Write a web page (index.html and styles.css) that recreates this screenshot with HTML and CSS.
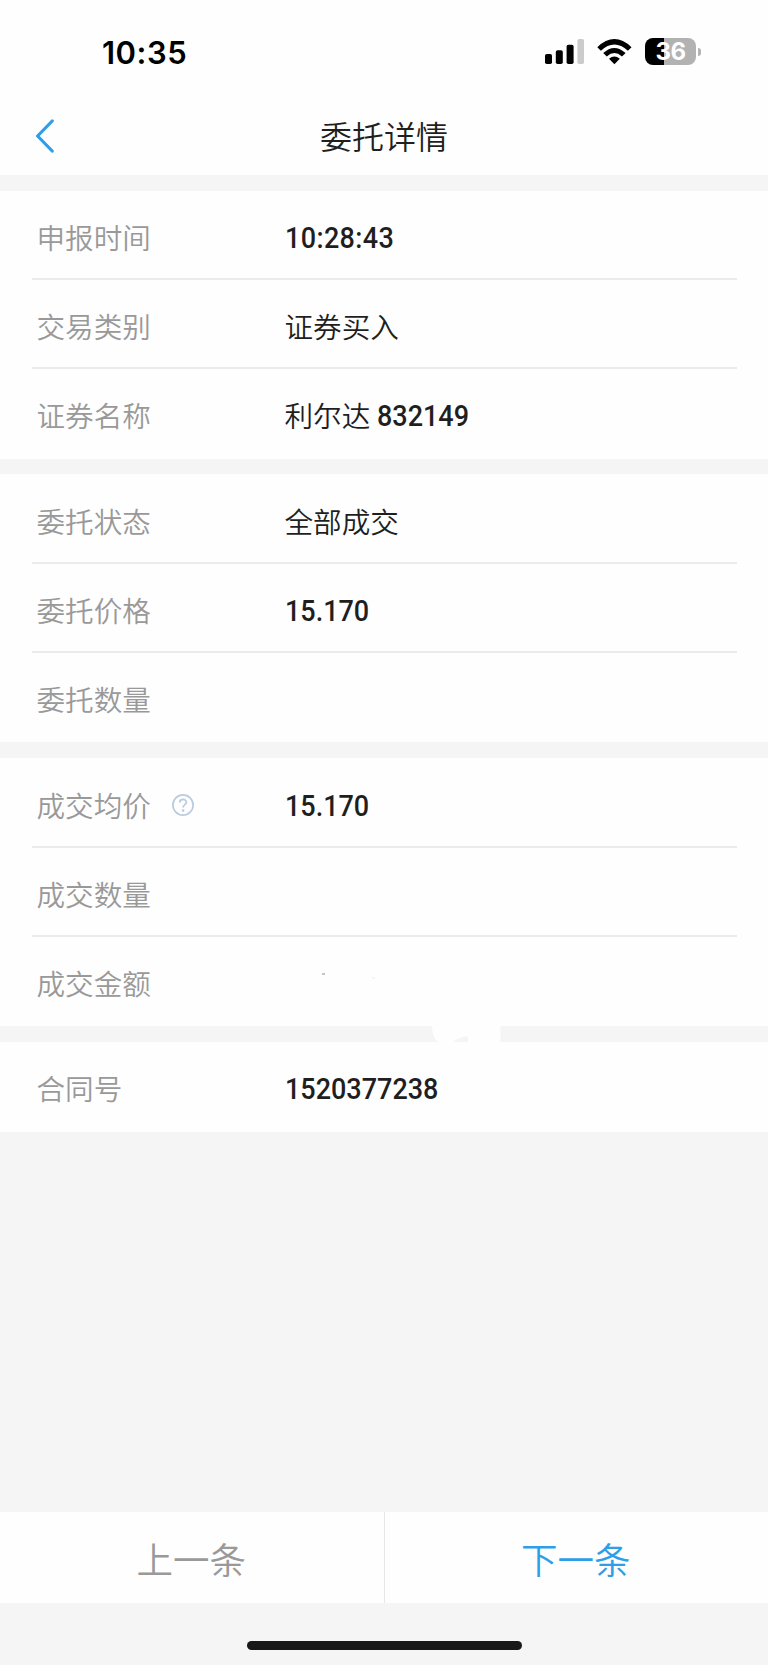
FILE: index.html
```html
<!DOCTYPE html>
<html lang="zh-CN">
<head>
    <meta charset="UTF-8">
    <meta name="viewport" content="width=device-width, initial-scale=1.0">
    <title>委托详情</title>
    <link rel="stylesheet" href="styles.css">
</head>
<body>
    <div class="status-bar">
        <span class="clock">10:35</span>
        <div class="status-icons">
            <svg class="signal" width="40" height="26" viewBox="0 0 40 26">
                <rect x="0" y="15" width="7" height="10" rx="1.8"/>
                <rect x="10.8" y="11.2" width="7" height="13.8" rx="1.8"/>
                <rect x="21.6" y="5.8" width="7" height="19.2" rx="1.8"/>
                <rect x="32.4" y="0" width="6.6" height="25" rx="1.8" fill="#cbcbcb"/>
            </svg>
            <svg class="wifi" width="35" height="26" viewBox="0 0 35 26">
                <path d="M0.3 8.2 Q17.3 -8 34.5 8.2 L30.9 11.8 Q17.3 -1 3.9 11.8 Z"/>
                <path d="M6.2 14.1 Q17.3 3.7 28.6 14.1 L25 17.5 Q17.3 10.7 9.8 17.5 Z"/>
                <path d="M12 19.7 Q17.3 15.3 22.8 19.7 L17.4 25.2 Z"/>
            </svg>
            <div class="battery">36</div>
            <div class="battery-tip"></div>
        </div>
    </div>

    <div class="header">
        <svg class="back" width="20" height="34" viewBox="0 0 20 34">
            <path d="M18.2 2 L3.6 17 L18.2 32"/>
        </svg>
        <h1>委托详情</h1>
    </div>

    <div class="content">
        <div class="section">
            <div class="row"><span class="label">申报时间</span><span class="value"><span class="num time">10:28:43</span></span></div>
            <div class="row"><span class="label">交易类别</span><span class="value">证券买入</span></div>
            <div class="row"><span class="label">证券名称</span><span class="value">利尔达 <span class="num">832149</span></span></div>
        </div>

        <div class="section">
            <div class="row"><span class="label">委托状态</span><span class="value">全部成交</span></div>
            <div class="row"><span class="label">委托价格</span><span class="value"><span class="num">15.170</span></span></div>
            <div class="row"><span class="label">委托数量</span><span class="value"></span></div>
        </div>

        <div class="section">
            <div class="row">
                <span class="label">成交均价
                    <svg class="help" width="22" height="22" viewBox="0 0 22 22">
                        <circle cx="11" cy="11" r="10.1"/>
                        <path d="M7.7 8.6 C7.7 4.2 14.4 4.3 14.4 8.3 C14.4 10.8 11.1 10.6 11.1 13.6"/>
                        <circle class="dot" cx="11.1" cy="16.6" r="1.3"/>
                    </svg>
                </span>
                <span class="value"><span class="num">15.170</span></span>
            </div>
            <div class="row"><span class="label">成交数量</span><span class="value"></span></div>
            <div class="row"><span class="label">成交金额</span><span class="value"><i class="speck"></i><i class="speck faint"></i></span></div>
            <svg class="smudge" width="70" height="18" viewBox="0 0 70 18">
                <path d="M0 0 H68.5 V18 H36 V10 Q25 12 19 17 L17 18 H8 Q0 12 0 0 Z"/>
            </svg>
        </div>

        <div class="section">
            <div class="row"><span class="label">合同号</span><span class="value"><span class="num">1520377238</span></span></div>
        </div>
    </div>

    <div class="footer">
        <button class="prev-btn">上一条</button>
        <button class="next-btn">下一条</button>
    </div>
    <div class="home-area">
        <div class="home-bar"></div>
    </div>
</body>
</html>
```

FILE: styles.css
```css
* {
    box-sizing: border-box;
}
body {
    margin: 0;
    height: 1665px;
    display: flex;
    flex-direction: column;
    background-color: #f5f5f5;
    color: #1f1f1f;
    font-family: "Noto Sans CJK SC", sans-serif;
    font-weight: 350;
}
.status-bar {
    height: 96px;
    padding: 38px 67px 0 102px;
    display: flex;
    justify-content: space-between;
    align-items: flex-start;
    background-color: #fefefe;
}
.clock {
    font-family: Inter, sans-serif;
    font-size: 31px;
    font-weight: 600;
    line-height: 30px;
    letter-spacing: 0.5px;
    color: #000;
}
.status-icons {
    display: flex;
    align-items: center;
    height: 27px;
}
.signal {
    margin-right: 12px;
}
.wifi {
    margin-right: 13px;
}
.battery {
    width: 51px;
    height: 27px;
    border-radius: 8px;
    background: linear-gradient(to right, #000 19px, #b2b2b2 19px);
    color: #fff;
    font-family: Inter, sans-serif;
    font-size: 24px;
    font-weight: 700;
    line-height: 28px;
    letter-spacing: -0.5px;
    text-align: center;
}
.battery-tip {
    width: 3px;
    height: 8px;
    margin-left: 2px;
    border-radius: 0 4px 4px 0;
    background-color: #b2b2b2;
}
.header {
    height: 79px;
    padding: 0 34px;
    display: grid;
    grid-template-columns: 20px 1fr 20px;
    align-items: center;
    background-color: #fefefe;
}
.header h1 {
    margin: 0 0 2px;
    font-size: 32px;
    font-weight: 350;
    line-height: 40px;
    text-align: center;
}
.back {
    fill: none;
    stroke: #2f9ee9;
    stroke-width: 3.2;
    stroke-linecap: round;
    stroke-linejoin: round;
}
.content {
    flex: 1;
    padding-top: 15.6px;
    display: flex;
    flex-direction: column;
    gap: 15.9px;
}
.section {
    position: relative;
    padding: 0 31px 0 32px;
    background-color: #fefefe;
}
.row {
    height: 89.33px;
    padding: 5px 0 0 4.5px;
    display: flex;
    align-items: center;
    border-bottom: 2px solid #ebebeb;
    font-size: 28.6px;
    line-height: 40px;
}
.section .row:last-of-type {
    border-bottom-color: transparent;
}
.label {
    width: 248px;
    display: flex;
    align-items: center;
    color: #999;
}
.value {
    display: flex;
    align-items: center;
    white-space: pre;
}
.num {
    display: inline-block;
    padding-top: 2px;
    font-family: Roboto, sans-serif;
    font-size: 29.5px;
    font-weight: 500;
    transform: scaleX(0.915);
    transform-origin: left;
}
.num.time {
    letter-spacing: 0.4px;
}
.help {
    margin-left: 21px;
    fill: none;
    stroke: #bacbe0;
    stroke-width: 1.7;
}
.help .dot {
    fill: #bacbe0;
    stroke: none;
}
.speck {
    width: 3px;
    height: 2px;
    margin: -18px 0 0 37px;
    background-color: #c5c5c5;
}
.speck.faint {
    margin: -11px 0 0 47px;
    background-color: #f5f5f5;
}
.smudge {
    position: absolute;
    top: 100%;
    left: 432px;
    fill: #fefefe;
}
.footer {
    height: 91px;
    display: flex;
    background-color: #fefefe;
}
.footer button {
    flex: 1;
    padding: 1px 1px 0 0;
    border: none;
    background: none;
    font-family: inherit;
    font-size: 36.5px;
    font-weight: 350;
    color: #999;
}
.footer .prev-btn {
    border-right: 1px solid #e6e6e6;
}
.footer .next-btn {
    color: #2f9ee9;
}
.home-area {
    height: 62px;
    padding-top: 38px;
}
.home-bar {
    width: 275px;
    height: 9px;
    margin: 0 auto;
    border-radius: 5px;
    background-color: #181818;
}
```
